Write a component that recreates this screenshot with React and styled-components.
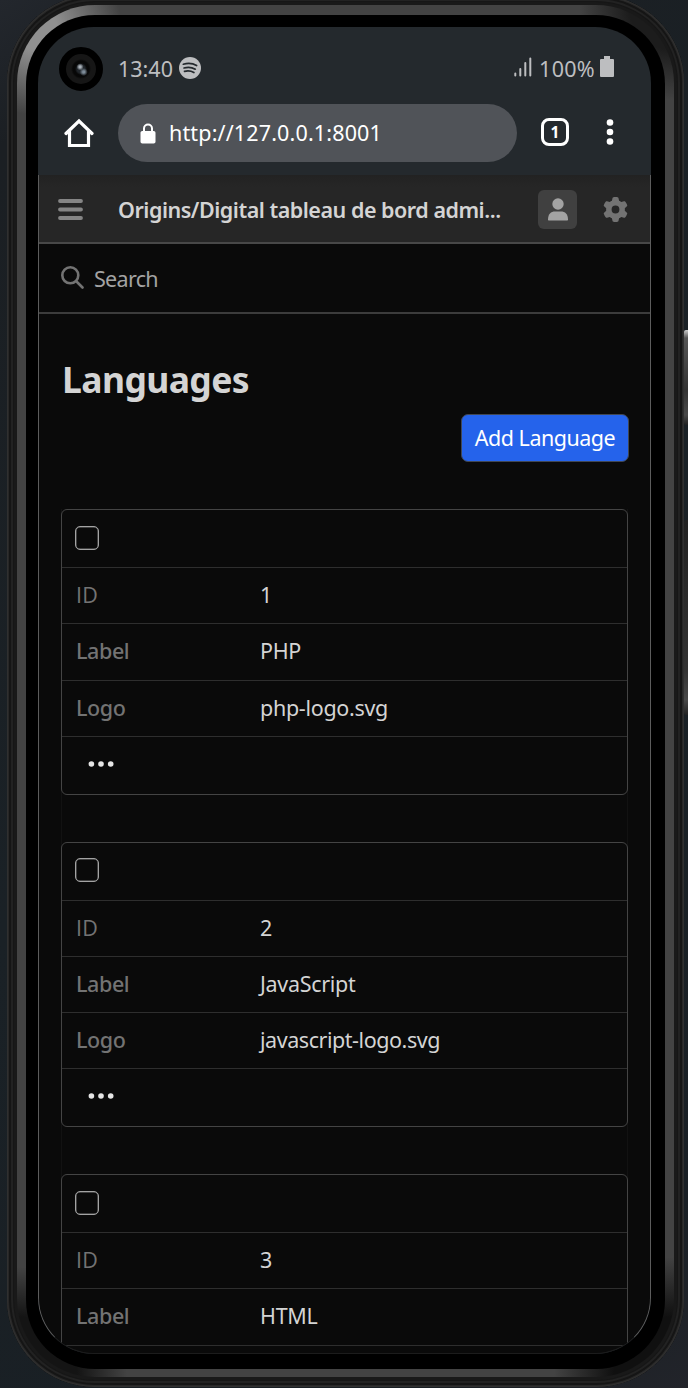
import React from "react";
import styled, { createGlobalStyle } from "styled-components";

const Global = createGlobalStyle`
  * { box-sizing: border-box; }
  html, body { margin: 0; height: 1388px; overflow: hidden; }
  body {
    background: linear-gradient(145deg, #23272d 0, #1b1f23 120px, #1a2126 50%, #191f24 90%, #22242a 100%);
    font-family: "Noto Sans", "Open Sans", sans-serif;
  }
`;

const Page = styled.div`
  position: relative;
  height: 1388px;
  padding-left: 7px;
  overflow: hidden;
`;
const Shell = styled.div`
  width: 677px;
  height: 1392px;
  margin-top: -5px;
  padding: 10px;
  border-radius: 88px;
  background: #191919;
  box-shadow: inset 0 0 0 1px #303030, inset 0 0 0 2px #272727, inset 0 0 0 4px #151515, inset 0 0 0 6px #222, inset 0 0 0 7px #161616;
`;
const Band = styled.div`
  height: 1372px;
  padding: 10px 9px 8px;
  border-radius: 78px;
  background:
    radial-gradient(circle at 20px 25px, #909090 0 20px, transparent 85px),
    radial-gradient(circle at 100% 0, #1c1c1c 0 45px, transparent 95px),
    radial-gradient(circle at 0 100%, #141414 0 60px, transparent 110px),
    radial-gradient(circle at 100% 100%, #101010 0 60px, transparent 120px),
    #434343;
`;
const Bezel = styled.div`
  height: 1354px;
  padding: 12px 14px 15px 12px;
  border-radius: 69px;
  background: #000;
`;
const Screen = styled.main`
  display: flex;
  flex-direction: column;
  height: 1327px;
  border-radius: 56px;
  overflow: hidden;
  background: #24292d;
`;
const SideButton = styled.div`
  position: absolute;
  left: 684px;
  top: ${(p) => p.$top}px;
  width: 4px;
  height: ${(p) => p.$height}px;
  border-radius: 2px 0 0 2px;
  background: ${(p) => p.$fill};
`;

const Text = styled.span`
  font-family: ${(p) => (p.$plain ? '"Open Sans", sans-serif' : "inherit")};
  font-size: ${(p) => p.$size || 21.5}px;
  font-weight: ${(p) => p.$weight || 400};
  letter-spacing: ${(p) => p.$spacing ?? -0.25}px;
  line-height: 30px;
  color: ${(p) => p.$color || "#d4d4d4"};
  white-space: nowrap;
`;

const StatusBar = styled.div`
  display: flex;
  align-items: center;
  height: 76px;
  padding: 8px 37px 0 21px;
`;
const Camera = styled.div`
  width: 44px;
  height: 44px;
  margin-right: 15px;
  border: 7px solid #000;
  border-radius: 50%;
  background: radial-gradient(circle at 47% 43%, #aab2ba 0 1px, transparent 3.5px),
    radial-gradient(circle at 59% 60%, #7d8b98 0 1px, transparent 4px),
    radial-gradient(circle, #20252a 0 4px, #070707 6px 8px, #161616 10px);
`;
const Icon = styled.svg`
  display: block;
  flex: none;
  width: ${(p) => p.$w}px;
  height: ${(p) => p.$h || p.$w}px;
  margin: ${(p) => p.$margin || 0};
`;
const Spacer = styled.div`
  flex: 1;
`;

const AddressRow = styled.div`
  display: flex;
  align-items: center;
  height: 72px;
  padding: 0 33px 13px 26px;
`;
const AddressBar = styled.div`
  display: flex;
  align-items: center;
  width: 399px;
  height: 58px;
  margin: 0 24px;
  padding-left: 22px;
  border-radius: 29px;
  background: #505358;
`;
const TabCount = styled.div`
  display: flex;
  align-items: center;
  justify-content: center;
  width: 28px;
  height: 28px;
  margin-top: -2px;
  border: 3px solid #fff;
  border-radius: 8px;
`;

const Site = styled.div`
  flex: 1;
  min-height: 0;
  border: 1px solid #5c5c5c;
  border-top: 0;
  border-bottom-color: #1c1c1c;
  border-radius: 0 0 56px 56px;
  overflow: hidden;
  background: #0a0a0a;
`;
const Header = styled.header`
  display: flex;
  align-items: center;
  height: 69px;
  padding: 1px 22px 0 19px;
  border-bottom: 2px solid #484848;
  background: linear-gradient(#222 0, #262626 12px);
`;
const SiteName = styled(Text)`
  padding-top: 2px;
`;
const UserButton = styled.div`
  display: flex;
  justify-content: center;
  align-items: center;
  width: 39px;
  height: 39px;
  margin-right: 26px;
  border-radius: 6px;
  background: #404040;
`;
const SearchBar = styled.div`
  display: flex;
  align-items: center;
  height: 70px;
  padding: 2px 0 0 22px;
  border-bottom: 2px solid #3c3c3c;
`;
const Content = styled.section`
  display: flex;
  flex-direction: column;
  padding: 0 22px;
`;
const Title = styled.h1`
  height: 48px;
  margin: 41px 0 11px 1px;
  font-size: 35.5px;
  font-weight: 700;
  line-height: 48px;
  letter-spacing: -0.6px;
  color: #d4d4d4;
`;
const AddButton = styled.button`
  align-self: flex-end;
  width: 168px;
  height: 48px;
  margin: 0 -1px 47px 0;
  padding: 0;
  border: 1px solid #404754;
  border-radius: 7px;
  background: #2563eb;
  font-family: inherit;
`;
const List = styled.div`
  display: flex;
  flex-direction: column;
  gap: 47px;
  flex: none;
  width: 567px;
  border: solid #121212;
  border-width: 0 1px;
`;
const Card = styled.article`
  height: 285.5px;
  margin: 0 -1px;
  border: 1px solid #444;
  border-radius: 6px;
`;
const Row = styled.div`
  display: grid;
  grid-template-columns: 184px 1fr;
  align-items: center;
  height: ${(p) => p.$height || 56.25}px;
  padding: 0 0 1px 14px;
  border-bottom: ${(p) => (p.$last ? 0 : 1)}px solid #2e2e2e;
`;
const Checkbox = styled.span`
  width: 24px;
  height: 24px;
  margin: -1px 0 0 -1px;
  border: 1.5px solid #a3a3a3;
  border-radius: 5px;
  box-shadow: inset 0 0 0 0.5px #777;
`;

const languages = [
  { id: "1", label: "PHP", logo: "php-logo.svg" },
  { id: "2", label: "JavaScript", logo: "javascript-logo.svg" },
  { id: "3", label: "HTML" },
];

function Field({ name, value, plain }) {
  return (
    <Row>
      <Text $color="#737373" $weight={500} $plain={plain} $spacing={plain ? 0.2 : -0.4}>{name}</Text>
      <Text $spacing={value.length > 12 ? -0.45 : -0.3}>{value}</Text>
    </Row>
  );
}

function LanguageCard({ item }) {
  return (
    <Card>
      <Row $height={58}><Checkbox /></Row>
      <Field name="ID" value={item.id} plain />
      <Field name="Label" value={item.label} />
      {item.logo && (
        <>
          <Field name="Logo" value={item.logo} />
          <Row $height={55} $last>
            <Icon $w={26} $h={6} $margin="0 0 0 12px" viewBox="0 0 26 6" fill="#e5e5e5">
              <circle cx="3.4" cy="3" r="2.8" /><circle cx="13" cy="3" r="2.8" /><circle cx="22.700" cy="3" r="2.8" />
            </Icon>
          </Row>
        </>
      )}
      {!item.logo && <Row />}
    </Card>
  );
}

export default function App() {
  return (
    <Page>
      <Global />
      <Shell>
        <Band>
          <Bezel>
            <Screen>
              <StatusBar>
                <Camera />
                <Text $color="#bdbec0" $spacing={0}>13:40</Text>
                <Icon $w={22} $margin="0 0 3px 6px" viewBox="0 0 22 22">
                  <circle cx="11" cy="11" r="11" fill="#bdbec0" />
                  <path d="M4.3 7.2c4.4-1.3 9.6-.9 13.3 1.3M5 11c3.9-1.1 8-.7 11.3 1.2M5.5 14.4c3.3-.8 6.700-.4 9.400 1.100" fill="none" stroke="#24292d" strokeWidth="1.700" strokeLinecap="round" />
                </Icon>
                <Spacer />
                <Icon $w={18} $h={20} $margin="0 7px 5px 0" viewBox="0 0 18 20">
                  <path d="M1.300 16.500v2M6.300 12v6.500M11.300 6v12.500M16.300 1.500v17" fill="none" stroke="#bdbec0" strokeWidth="2" strokeLinecap="round" />
                </Icon>
                <Text $color="#bdbec0" $spacing={0.3}>100%</Text>
                <Icon $w={14} $h={21} $margin="0 0 5px 5px" viewBox="0 0 14 21">
                  <path d="M4 0h6v3h3a1 1 0 0 1 1 1v16a1 1 0 0 1-1 1H1a1 1 0 0 1-1-1V4a1 1 0 0 1 1-1h3z" fill="#bdbec0" />
                </Icon>
              </StatusBar>
              <AddressRow>
                <Icon $w={30} viewBox="0 0 30 30">
                  <path d="M2 15.500L15 3l13 12.500M5.500 13.500V27.500h19V13.500" fill="none" stroke="#fff" strokeWidth="3.200" strokeLinecap="round" strokeLinejoin="miter" />
                </Icon>
                <AddressBar>
                  <Icon $w={16} $h={21} $margin="2px 13px 0 0" viewBox="0 0 16 21">
                    <path d="M4 9V5.500a4 4 0 0 1 8 0V9" fill="none" stroke="#fff" strokeWidth="2" />
                    <rect x=".5" y="8" width="15" height="12.500" rx="1.800" fill="#fff" />
                  </Icon>
                  <Text $color="#fff" $spacing={0.15}>http://127.0.0.1:8001</Text>
                </AddressBar>
                <TabCount><Text $color="#fff" $size={15.5} $weight={700} $spacing={0}>1</Text></TabCount>
                <Spacer />
                <Icon $w={8} $h={26} $margin="-2px 4px 0 0" viewBox="0 0 8 26" fill="#fff">
                  <circle cx="4" cy="3.500" r="3.300" /><circle cx="4" cy="13" r="3.300" /><circle cx="4" cy="22.500" r="3.300" />
                </Icon>
              </AddressRow>
              <Site>
                <Header>
                  <Icon $w={25} $h={21} $margin="1px 35px 0 0" viewBox="0 0 25 21">
                    <path d="M2 2h21M2 10.500h21M2 19h21" stroke="#858585" strokeWidth="3.800" strokeLinecap="round" />
                  </Icon>
                  <SiteName $weight={600} $spacing={-0.48}>Origins/Digital tableau de bord admi...</SiteName>
                  <Spacer />
                  <UserButton>
                    <Icon $w={20} $h={23} viewBox="0 0 20 23" fill="#a3a3a3">
                      <circle cx="10" cy="6" r="5.700" />
                      <path d="M0 21.500C0 16 3 13.400 7 13.400h6c4 0 7 2.600 7 8.100 0 .6-.4 1-1 1H1c-.6 0-1-.4-1-1z" />
                    </Icon>
                  </UserButton>
                  <Icon $w={25} viewBox="0 0 512 512" fill="#737373">
                    <path d="M495.900 166.600c3.200 8.700 .5 18.400-6.400 24.600l-43.300 39.400c1.100 8.300 1.700 16.800 1.700 25.400s-.6 17.100-1.700 25.400l43.300 39.400c6.900 6.200 9.600 15.900 6.400 24.600c-4.400 11.900-9.700 23.300-15.800 34.300l-4.700 8.100c-6.600 11-14 21.400-22.100 31.200c-5.900 7.200-15.700 9.600-24.500 6.800l-55.700-17.700c-13.400 10.300-28.200 18.900-44 25.400l-12.500 57.100c-2 9.100-9 16.300-18.200 17.800c-13.800 2.300-28 3.500-42.500 3.500s-28.700-1.200-42.500-3.500c-9.200-1.500-16.200-8.700-18.200-17.800l-12.500-57.100c-15.800-6.500-30.600-15.100-44-25.400L83.100 425.900c-8.800 2.800-18.600 .3-24.500-6.800c-8.100-9.800-15.500-20.200-22.100-31.200l-4.700-8.100c-6.100-11-11.400-22.400-15.800-34.300c-3.200-8.700-.5-18.400 6.400-24.600l43.300-39.400C64.600 273.100 64 264.600 64 256s.6-17.100 1.700-25.400L22.400 191.200c-6.900-6.200-9.600-15.900-6.400-24.600c4.400-11.900 9.700-23.300 15.800-34.300l4.700-8.100c6.600-11 14-21.400 22.100-31.200c5.900-7.200 15.700-9.600 24.500-6.800l55.700 17.700c13.400-10.300 28.200-18.900 44-25.400l12.500-57.100c2-9.100 9-16.300 18.200-17.800C227.300 1.200 241.500 0 256 0s28.700 1.200 42.500 3.500c9.200 1.500 16.200 8.700 18.200 17.800l12.500 57.100c15.800 6.500 30.600 15.100 44 25.400l55.700-17.700c8.800-2.800 18.600-.3 24.500 6.800c8.100 9.800 15.500 20.200 22.100 31.200l4.700 8.100c6.100 11 11.400 22.400 15.800 34.300zM256 336a80 80 0 1 0 0-160 80 80 0 1 0 0 160z" />
                  </Icon>
                </Header>
                <SearchBar>
                  <Icon $w={23} $margin="0 10px 3px 0" viewBox="0 0 23 23">
                    <path d="M15.500 15.500l6 6M17.300 9.300a8 8 0 1 1-16 0 8 8 0 0 1 16 0z" fill="none" stroke="#737373" strokeWidth="2.600" strokeLinecap="round" />
                  </Icon>
                  <Text $color="#a3a3a3" $spacing={-0.7}>Search</Text>
                </SearchBar>
                <Content>
                  <Title>Languages</Title>
                  <AddButton><Text $color="#fff" $spacing={-0.5}>Add Language</Text></AddButton>
                  <List>
                    {languages.map((item) => <LanguageCard key={item.id} item={item} />)}
                  </List>
                </Content>
              </Site>
            </Screen>
          </Bezel>
        </Band>
      </Shell>
      <SideButton $top={330} $height={95} $fill="linear-gradient(#ccc 0, #555 8px, #333 60px, #484848 85px, #222)" />
      <SideButton $top={520} $height={195} $fill="linear-gradient(#222, #333 150px, #484848 180px, #222)" />
    </Page>
  );
}
